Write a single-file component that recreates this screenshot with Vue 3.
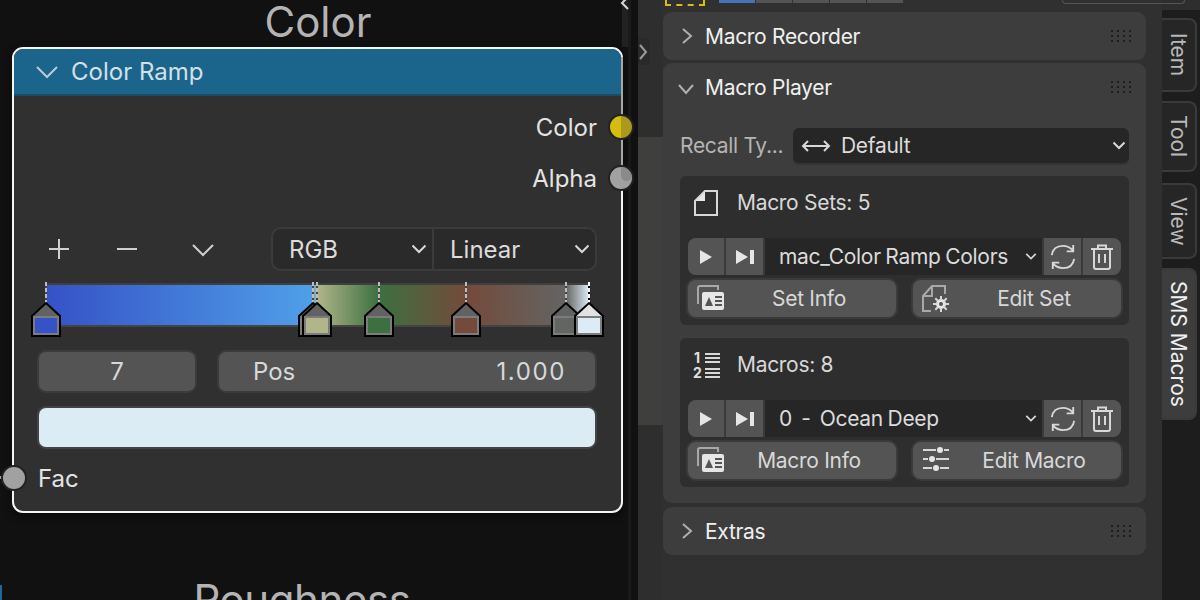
<template>
  <div class="ecran">
    <!-- Editeur de noeuds -->
    <div class="editeur">
      <div class="titre titre-haut">Color</div>
      <svg class="fleche-haut" width="14" height="14" viewBox="0 0 14 14"><path d="M10 -3 L4 3 L10 9" /></svg>

      <div class="noeud">
        <div class="noeud-tete">
          <svg width="26" height="14" viewBox="0 0 26 14"><path d="M2 2 L12 12 L22 2" /></svg>
          <span>Color Ramp</span>
        </div>
        <div class="noeud-corps">
          <div class="sortie">Color<i class="prise prise-jaune"></i></div>
          <div class="sortie">Alpha<i class="prise prise-grise"></i></div>

          <div class="outils">
            <svg class="outil outil-plus" width="68" height="24" viewBox="0 0 24 24"><path d="M12 2 V22 M2 12 H22" /></svg>
            <svg class="outil" width="68" height="24" viewBox="0 0 24 24"><path d="M2 12 H22" /></svg>
            <svg class="outil" width="84" height="24" viewBox="0 0 24 24"><path d="M2 8 L12 18 L22 8" /></svg>
            <div class="choix-double">
              <div class="choix">RGB<svg width="16" height="10" viewBox="0 0 16 10"><path d="M1.5 1.5 L8 8 L14.5 1.5" /></svg></div>
              <div class="choix choix-droit">Linear<svg width="16" height="10" viewBox="0 0 16 10"><path d="M1.5 1.5 L8 8 L14.5 1.5" /></svg></div>
            </div>
          </div>

          <div class="rampe">
            <div class="rampe-barre"></div>
            <svg class="reperes" width="590" height="60" viewBox="0 0 590 60">
              <g v-for="r in reperes" :key="r.x" :transform="`translate(${r.x - 27} 0)`">
                <path d="M0 1 V22" class="tiret-fond" :class="{ actif: r.actif }" />
                <path d="M0 1 V22" class="tiret" :class="{ actif: r.actif }" />
                <path d="M0 22 L14 35 V55 H-14 V35 Z" class="maison" :class="{ actif: r.actif }" />
                <rect x="-13" y="35" width="26" height="19" fill="#7c7c7c" />
                <rect x="-11" y="37" width="22" height="15" :fill="r.couleur" />
              </g>
            </svg>
          </div>

          <div class="champs">
            <div class="champ champ-index">7</div>
            <div class="champ champ-pos"><span>Pos</span><span class="valeur">1.000</span></div>
          </div>
          <div class="nuance"></div>
          <div class="entree"><i class="prise prise-entree"></i>Fac</div>
        </div>
      </div>

      <div class="titre titre-bas">Roughness</div>
      <div class="lien-bleu"></div>
    </div>

    <div class="separation"></div>

    <!-- Barre laterale -->
    <div class="cote">
      <div class="languette">
        <svg width="10" height="16" viewBox="0 0 10 16"><path d="M2 1 L8 8 L2 15" /></svg>
      </div>
      <div class="contenu">
        <div class="haut">
          <div class="pointille"></div>
          <div class="onglets-haut"><b></b><b></b><b></b><b></b><b></b></div>
          <div class="bouton-haut"></div>
        </div>

        <section class="panneau ferme">
          <div class="panneau-tete">
            <svg class="chevron" width="12" height="18" viewBox="0 0 12 18"><path d="M2 2 L10 9 L2 16" /></svg>
            <span>Macro Recorder</span>
            <span class="prise-main"><u v-for="n in 12" :key="n"></u></span>
          </div>
        </section>

        <section class="panneau">
          <div class="panneau-tete">
            <svg class="chevron ouvert" width="18" height="12" viewBox="0 0 18 12"><path d="M2 2 L9 10 L16 2" /></svg>
            <span>Macro Player</span>
            <span class="prise-main"><u v-for="n in 12" :key="n"></u></span>
          </div>

          <div class="rappel">
            <label>Recall Ty...</label>
            <div class="rappel-choix">
              <svg width="30" height="14" viewBox="0 0 30 14"><path d="M7 2 L2 7 L7 12 M2 7 H28 M23 2 L28 7 L23 12" /></svg>
              <span>Default</span>
              <svg class="fin" width="14" height="9" viewBox="0 0 14 9"><path d="M1.5 1.5 L7 7 L12.5 1.5" /></svg>
            </div>
          </div>

          <div v-for="b in blocs" :key="b.titre" class="bloc">
            <div class="bloc-titre">
              <svg v-if="b.liste" width="28" height="28" viewBox="0 0 28 28">
                <text x="1" y="12" class="chiffre">1</text>
                <text x="0" y="27" class="chiffre">2</text>
                <path d="M12 3 H27 M12 7 H27 M12 11 H27 M12 18 H27 M12 22 H27 M12 26 H27" />
              </svg>
              <svg v-else width="28" height="28" viewBox="0 0 28 28">
                <path class="plein" d="M2 12 L12 2 V12 Z" />
                <path d="M2 12 L12 2 H24 V26 H2 Z" />
              </svg>
              <span>{{ b.titre }}</span>
            </div>

            <div class="rangee">
              <div class="carre"><svg width="14" height="16" viewBox="0 0 14 16"><path class="plein" d="M1 1 L13 8 L1 15 Z" /></svg></div>
              <div class="carre carre-37"><svg width="20" height="16" viewBox="0 0 20 16"><path class="plein" d="M1 1 L13 8 L1 15 Z M15 1 H19 V15 H15 Z" /></svg></div>
              <div class="liste">
                <span>{{ b.nom }}</span>
                <svg width="12" height="9" viewBox="0 0 14 9"><path d="M1.5 1.5 L7 7 L12.5 1.5" /></svg>
              </div>
              <div class="carre carre-37">
                <svg width="26" height="26" viewBox="0 0 28 28">
                  <path d="M2 12 C3 5 8 2 14 2 C18 2 22 4 25 7 M25 1 V8 H18 M26 16 C25 23 20 26 14 26 C10 26 6 24 3 21 M3 27 V20 H10" />
                </svg>
              </div>
              <div class="carre carre-38">
                <svg width="24" height="26" viewBox="0 0 24 26">
                  <path d="M1 5 H23 M8 5 V1.5 H16 V5 M4 5 V23 Q4 25 6 25 H18 Q20 25 20 23 V5 M9 10 V19 M15 10 V19" />
                </svg>
              </div>
            </div>

            <div class="actions">
              <div class="action">
                <svg width="28" height="26" viewBox="0 0 28 26">
                  <path d="M1 19 V3 Q1 1 3 1 H21 V5" class="gris" />
                  <rect x="5" y="7" width="22" height="18" rx="2" class="plein" />
                  <path d="M8 21 L12 12 L16 21 Z" class="creux" />
                  <path d="M18 12 H25 M18 16 H25 M18 20 H25" class="trou" />
                </svg>
                <span>{{ b.info }}</span>
              </div>
              <div class="action">
                <svg v-if="b.liste" width="28" height="24" viewBox="0 0 28 24">
                  <path d="M1 3 H14 M22 3 H27 M1 12 H6 M14 12 H27 M1 21 H10 M18 21 H27" />
                  <circle cx="18" cy="3" r="3" class="plein" />
                  <circle cx="10" cy="12" r="3" class="plein" />
                  <circle cx="14" cy="21" r="3" class="plein" />
                </svg>
                <svg v-else width="28" height="28" viewBox="0 0 28 28">
                  <path d="M9 26 H1 V11 L10 1 H23 V9 M10 1 V11 H1" class="gris" />
                  <circle cx="19" cy="19" r="3.5" class="roue" />
                  <path d="M19 11 V15 M19 23 V27 M11 19 H15 M23 19 H27 M13.3 13.3 L16 16 M22 22 L24.7 24.7 M24.7 13.3 L22 16 M16 22 L13.3 24.7" />
                </svg>
                <span>{{ b.edit }}</span>
              </div>
            </div>
          </div>
        </section>

        <section class="panneau ferme">
          <div class="panneau-tete">
            <svg class="chevron" width="12" height="18" viewBox="0 0 12 18"><path d="M2 2 L10 9 L2 16" /></svg>
            <span>Extras</span>
            <span class="prise-main"><u v-for="n in 12" :key="n"></u></span>
          </div>
        </section>
      </div>

      <div class="onglets">
        <div class="onglet onglet-item">Item</div>
        <div class="onglet onglet-tool">Tool</div>
        <div class="onglet onglet-view">View</div>
        <div class="onglet onglet-sms">SMS Macros</div>
      </div>
    </div>
  </div>
</template>

<script setup>
// Les poignees de la rampe, dans l'ordre de dessin
const reperes = [
  { x: 46, couleur: "#3552c7" },
  { x: 313, couleur: "#4f9fe8" },
  { x: 317, couleur: "#b0b689" },
  { x: 379, couleur: "#3c7040" },
  { x: 466, couleur: "#744a3a" },
  { x: 566, couleur: "#636563" },
  { x: 589, couleur: "#dcecf5", actif: true },
];

const blocs = [
  { titre: "Macro Sets: 5", nom: "mac_Color Ramp Colors", info: "Set Info", edit: "Edit Set" },
  { titre: "Macros: 8", nom: "0  -  Ocean Deep", info: "Macro Info", edit: "Edit Macro", liste: true },
];
</script>

<style scoped>
.ecran {
  width: 1200px;
  height: 600px;
  display: flex;
  overflow: hidden;
  font-family: Inter, "Liberation Sans", sans-serif;
  background: #111;
  color: #e4e4e4;
}
svg path {
  fill: none;
  stroke: #d8d8d8;
  stroke-width: 2;
}
svg .plein {
  fill: #e6e6e6;
  stroke: none;
}

/* Editeur */
.editeur {
  position: relative;
  z-index: 1;
  flex: none;
  width: 622px;
}
.titre {
  position: absolute;
  left: 0;
  width: 636px;
  text-align: center;
  font-size: 42px;
  line-height: 44px;
  color: #b4b4b4;
}
.titre-haut {
  top: 0;
}
.titre-bas {
  top: 578px;
  left: -16px;
  letter-spacing: -0.4px;
}
.fleche-haut {
  position: absolute;
  left: 618px;
  top: 0;
}
.lien-bleu {
  position: absolute;
  left: 0;
  top: 585px;
  width: 2px;
  height: 15px;
  background: #1d6a94;
}
.noeud {
  position: absolute;
  left: 12px;
  top: 47px;
  width: 611px;
  height: 466px;
  box-sizing: border-box;
  border: 2px solid #f4f4f4;
  border-radius: 11px;
  background: #303030;
  box-shadow: 0 3px 8px rgba(0, 0, 0, 0.5);
}
/* Le bord droit est plus terne le long des sorties */
.noeud::after {
  content: "";
  position: absolute;
  right: -2px;
  top: 8px;
  width: 2px;
  height: 122px;
  background: #a8a8a8;
}
.noeud-tete {
  height: 45px;
  display: flex;
  align-items: center;
  gap: 10px;
  padding-left: 21px;
  background: #1b648c;
  border-bottom: 2px solid #1c4a65;
  border-radius: 9px 9px 0 0;
  font-size: 24px;
  color: #d4e0e6;
}
.noeud-tete path {
  stroke: #b9cbd5;
}
.noeud-corps {
  padding: 6px 24px 0 23px;
}
.sortie {
  height: 51px;
  position: relative;
  display: flex;
  align-items: center;
  justify-content: flex-end;
  font-size: 24px;
}
.prise {
  position: absolute;
  z-index: 1;
  width: 26px;
  height: 26px;
  box-sizing: border-box;
  border-radius: 50%;
  border: 2px solid #222;
  background: #a1a1a1;
}
.sortie .prise {
  right: -37px;
  top: 12px;
}
.prise-jaune {
  background: linear-gradient(90deg, #d4bd0c 50%, #a99a1f 50%);
}
.prise-grise {
  overflow: hidden;
}
.prise-grise::after {
  content: "";
  position: absolute;
  left: 11px;
  top: -6px;
  width: 11px;
  height: 20px;
  border-radius: 6px;
  background: #8a8a8a;
}
.outils {
  margin-top: 23px;
  height: 44px;
  display: flex;
  align-items: center;
}
.outil {
  flex: none;
}
.outil-plus {
  margin-left: -12px;
}
.outil path {
  stroke: #d0d0d0;
}
.choix-double {
  margin-left: auto;
  width: 326px;
  height: 44px;
  box-sizing: border-box;
  display: flex;
  background: #2a2a2a;
  border: 2px solid #3b3b3b;
  border-radius: 10px;
}
.choix {
  width: 159px;
  display: flex;
  align-items: center;
  justify-content: space-between;
  padding: 0 5px 0 16px;
  box-sizing: border-box;
  font-size: 24px;
  color: #dcdcdc;
}
.choix-droit {
  flex: 1;
  border-left: 2px solid #3b3b3b;
}
.rampe {
  position: relative;
  margin: 12px 0 0;
  height: 44px;
}
.rampe-barre {
  position: absolute;
  left: 10px;
  top: 0;
  width: 542px;
  height: 44px;
  background: linear-gradient(90deg, #3552c7 0, #4f9fe8 266px, #b0b689 270px, #3c7040 332px, #744a3a 419px, #636563 519px, #dcecf5 542px);
  border-top: 2px solid #3f3f3f;
  border-bottom: 2px solid #444;
  box-sizing: border-box;
}
.reperes {
  position: absolute;
  left: -10px;
  top: -2px;
  overflow: visible;
}
.reperes .tiret-fond {
  stroke: #444;
}
.reperes .tiret {
  stroke: #bdbdbd;
  stroke-dasharray: 4 2;
}
.reperes .tiret-fond.actif {
  stroke: #000;
}
.reperes .tiret.actif {
  stroke: #fff;
}
.reperes .maison {
  fill: #626262;
  stroke: #000;
}
.reperes .maison.actif {
  fill: #e2e2e2;
}
.champs {
  margin-top: 23px;
  display: flex;
  gap: 20px;
}
.champ {
  height: 43px;
  box-sizing: border-box;
  background: #545454;
  border: 2px solid #3b3b3b;
  border-radius: 9px;
  font-size: 24px;
  color: #d8d8d8;
  display: flex;
  align-items: center;
}
.champ-index {
  width: 160px;
  justify-content: center;
}
.champ-pos {
  flex: 1;
  justify-content: space-between;
  padding: 0 29px 0 34px;
}
.valeur {
  letter-spacing: 1.6px;
}
.nuance {
  margin-top: 13px;
  height: 43px;
  background: #dcecf5;
  border: 2px solid #444;
  border-radius: 9px;
  box-sizing: border-box;
}
.entree {
  position: relative;
  margin-top: 14px;
  height: 30px;
  display: flex;
  align-items: center;
  padding-left: 1px;
  font-size: 24px;
}
.prise-entree {
  left: -36px;
  top: 2px;
}
/* Le lien qui arrive sur l'entree */
.entree::before {
  content: "";
  position: absolute;
  left: -37px;
  top: 13px;
  width: 5px;
  height: 3px;
  background: #a1a1a1;
}
.separation {
  flex: none;
  width: 16px;
  background:
    linear-gradient(#222 47px, transparent 47px) 0 0 / 6px 100% no-repeat,
    linear-gradient(90deg, #111 6px, #1a1a1a 6px, #1a1a1a 9px, #111 9px);
}

/* Barre laterale */
.cote {
  position: relative;
  flex: 1;
  display: flex;
  background: linear-gradient(#2e2e2e 137px, #3f3f3d 137px, #3f3f3d 425px, #2e2e2e 425px);
}
.languette {
  position: absolute;
  left: 0;
  top: 38px;
  width: 12px;
  height: 27px;
  background: #2a2a2a;
  border-radius: 0 4px 4px 0;
  display: flex;
  align-items: center;
}
.languette path {
  stroke: #9a9a9a;
}
.contenu {
  margin-left: 25px;
  width: 499px;
  flex: none;
  padding-right: 16px;
  box-sizing: border-box;
  background: #303030;
}
.haut {
  height: 12px;
  display: flex;
  align-items: flex-start;
}
.pointille {
  margin-left: 2px;
  width: 40px;
  height: 6px;
  box-sizing: border-box;
  border: 2px dashed #d8bd14;
  border-top: 0;
}
.onglets-haut {
  margin-left: 14px;
  display: flex;
  gap: 1px;
  height: 3px;
}
.onglets-haut b {
  width: 36px;
  background: #545454;
}
.onglets-haut b:first-child {
  background: #4772b3;
}
.bouton-haut {
  margin-left: auto;
  margin-right: -39px;
  width: 123px;
  height: 4px;
  box-sizing: border-box;
  border: 1px solid #555;
  border-top: 0;
  border-radius: 0 0 5px 5px;
}
.panneau {
  background: #3d3d3d;
  border-radius: 9px;
  margin-bottom: 3px;
  padding: 0 17px;
  height: 440px;
  box-sizing: border-box;
}
.panneau.ferme {
  height: 48px;
}
.panneau:last-child {
  margin-top: 4px;
}
.panneau-tete {
  position: relative;
  height: 48px;
  display: flex;
  align-items: center;
  font-size: 21px;
  letter-spacing: -0.3px;
  color: #f0f0f0;
  padding-left: 25px;
}
.chevron {
  position: absolute;
  left: 1px;
  top: 15px;
}
.chevron.ouvert {
  left: -3px;
  top: 20px;
}
.chevron path {
  stroke: #b0b0b0;
}
.prise-main {
  margin-left: auto;
  margin-right: -2px;
  display: grid;
  grid-template-columns: repeat(4, 2px);
  gap: 3px 4px;
}
.prise-main u {
  width: 2px;
  height: 2px;
  background: #1d1d1d;
}
.rappel {
  margin-top: 17px;
  display: flex;
  align-items: center;
  height: 35px;
}
.rappel label {
  width: 113px;
  font-size: 21px;
  letter-spacing: -0.3px;
  color: #b4b4b4;
}
.rappel-choix {
  flex: 1;
  height: 35px;
  display: flex;
  align-items: center;
  gap: 10px;
  padding: 0 3px 0 8px;
  background: #262626;
  border-radius: 6px;
  box-shadow: 0 2px 0 #343434;
  font-size: 21px;
  letter-spacing: -0.3px;
  color: #dcdcdc;
}
.rappel-choix .fin {
  margin-left: auto;
}
.bloc {
  margin-top: 13px;
  height: 149px;
  padding: 0 8px;
  box-sizing: border-box;
  background: #2e2e2e;
  border-radius: 6px;
}
.bloc-titre {
  height: 62px;
  padding: 0 0 9px 5px;
  box-sizing: border-box;
  display: flex;
  align-items: center;
  gap: 16px;
  font-size: 21px;
  letter-spacing: -0.3px;
  color: #d8d8d8;
}
.bloc-titre svg {
  flex: none;
}
.chiffre {
  font-size: 14px;
  font-weight: 700;
  fill: #e0e0e0;
  stroke: none;
}
.rangee {
  height: 37px;
  display: flex;
  gap: 2px;
  box-sizing: border-box;
  background: #3a3a3a;
  border-radius: 8px;
  overflow: hidden;
}
.carre {
  width: 36px;
  flex: none;
  background: #545454;
  display: flex;
  align-items: center;
  justify-content: center;
}
.carre-37 {
  width: 37px;
}
.carre-38 {
  width: 38px;
}
.liste {
  flex: 1;
  white-space: pre;
  background: #262626;
  display: flex;
  align-items: center;
  justify-content: space-between;
  padding: 0 5px 0 14px;
  font-size: 21px;
  letter-spacing: -0.3px;
  word-spacing: -1px;
  color: #dcdcdc;
}
.actions {
  margin-top: 5px;
  display: flex;
  justify-content: space-between;
}
.action {
  position: relative;
  width: 208px;
  height: 37px;
  padding-left: 34px;
  box-sizing: border-box;
  background: #545454;
  border-radius: 8px;
  box-shadow: 0 0 0 2px #3a3a3a;
  display: flex;
  align-items: center;
  justify-content: center;
  font-size: 21px;
  letter-spacing: -0.3px;
  color: #d8d8d8;
}
.action svg {
  position: absolute;
  left: 9px;
  top: 5px;
}
.action .gris {
  stroke: #a8a8a8;
}
.action .creux {
  fill: #545454;
  stroke: none;
}
.action .trou {
  stroke: #545454;
}
.action .roue {
  fill: none;
  stroke: #e6e6e6;
  stroke-width: 3;
}

/* Onglets verticaux */
.onglets {
  flex: none;
  width: 38px;
  margin-top: 10px;
  background: #1d1d1d;
  padding-top: 8px;
  box-sizing: border-box;
}
.onglet {
  width: 35px;
  box-sizing: border-box;
  writing-mode: vertical-rl;
  display: flex;
  align-items: center;
  justify-content: center;
  background: #262626;
  border: 2px solid #3a3a3a;
  border-left: 0;
  border-radius: 0 8px 8px 0;
  font-size: 21px;
  color: #b9b9b9;
}
.onglet-item {
  height: 74px;
}
.onglet-tool {
  margin-top: 9px;
  height: 71px;
}
.onglet-view {
  margin-top: 11px;
  height: 76px;
}
.onglet-sms {
  margin-top: 9px;
  height: 152px;
  background: #3d3d3d;
  color: #f0f0f0;
}
</style>
